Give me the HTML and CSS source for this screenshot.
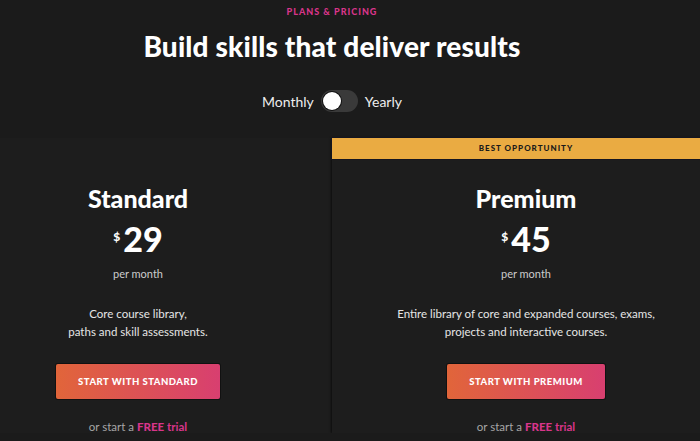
FILE: index.html
```html
<!DOCTYPE html>
<html lang="en">
<head>
  <meta charset="UTF-8" />
  <title>Plans &amp; Pricing</title>
  <link rel="stylesheet" href="styles.css">
</head>
<body>

  <div class="page">
    <p class="eyebrow">PLANS &amp; PRICING</p>
    <h1>Build skills that deliver results</h1>

    <div class="billing">
      <span>Monthly</span>
      <span class="switch"><span class="knob"></span></span>
      <span>Yearly</span>
    </div>

    <div class="plans">
      <div class="plan">
        <div class="plan-body">
          <h2>Standard</h2>
          <div class="price"><sup>$</sup>29</div>
          <p class="period">per month</p>
          <p class="desc">Core course library,<br>paths and skill assessments.</p>
          <a class="btn" href="#">START WITH STANDARD</a>
          <p class="trial">or start a <a href="#"><b>FREE</b> trial</a></p>
        </div>
      </div>

      <div class="plan featured">
        <div class="banner">BEST OPPORTUNITY</div>
        <div class="plan-body">
          <h2>Premium</h2>
          <div class="price"><sup>$</sup>45</div>
          <p class="period">per month</p>
          <p class="desc">Entire library of core and expanded courses, exams,<br>projects and interactive courses.</p>
          <a class="btn" href="#">START WITH PREMIUM</a>
          <p class="trial">or start a <a href="#"><b>FREE</b> trial</a></p>
        </div>
      </div>
    </div>
  </div>

</body>
</html>
```

FILE: styles.css
```css
body {
  margin: 0;
  background: #1b1b1b;
  color: #fff;
  font-family: Lato, "Open Sans", sans-serif;
  overflow: hidden;
}

.page {
  width: 664px;
  text-align: center;
}

.eyebrow {
  margin: 0;
  padding-top: 6px;
  font-size: 9px;
  font-weight: 900;
  letter-spacing: 1px;
  color: #d8358a;
}

h1 {
  margin: 13px 0 0;
  font-size: 28px;
  font-weight: 900;
  line-height: 32px;
  letter-spacing: 0.15px;
}

.billing {
  display: flex;
  justify-content: center;
  align-items: center;
  gap: 7px;
  margin-top: 28px;
  font-size: 14px;
  color: #eee;
}

.switch {
  width: 37px;
  height: 22px;
  border-radius: 11px;
  background: #3a3a3a;
  display: flex;
  align-items: center;
  padding: 0 2px;
  box-sizing: border-box;
}

.knob {
  width: 18px;
  height: 18px;
  border-radius: 50%;
  background: #fff;
  box-shadow: 0 0 0 1px #111;
}

.plans {
  display: flex;
  justify-content: center;
  margin-top: 26px;
}

.plan {
  flex: 0 0 388px;
  background: #1d1d1d;
  padding-top: 21px;
}

.plan.featured {
  padding-top: 0;
  box-shadow: -1px 0 2px rgba(0, 0, 0, 0.6);
}

.banner {
  height: 21px;
  line-height: 21px;
  background: #eaab42;
  color: #1a1a1a;
  font-size: 8px;
  font-weight: 900;
  letter-spacing: 1px;
  box-shadow: 0 0 0 1px #151520;
}

.plan-body {
  padding-top: 24px;
}

h2 {
  margin: 0;
  font-size: 25px;
  font-weight: 900;
  line-height: 30px;
}

.price {
  margin-top: 9px;
  font-size: 34px;
  font-weight: 900;
  line-height: 34px;
}

.price sup {
  font-size: 12px;
  vertical-align: top;
  position: relative;
  top: -2px;
  margin-right: 3px;
}

.period {
  margin: 11px 0 0;
  font-size: 11px;
  color: #ccc;
}

.desc {
  margin: 25px 0 0;
  font-size: 11.5px;
  line-height: 18px;
  color: #e6e6e6;
}

.btn {
  display: inline-block;
  margin-top: 23px;
  padding: 0 22px;
  height: 35px;
  line-height: 35px;
  border-radius: 2px;
  background: linear-gradient(90deg, #e1653a, #d83f70);
  box-shadow: 0 0 0 1px #111;
  color: #fff;
  font-size: 9.5px;
  font-weight: 900;
  letter-spacing: 0.5px;
  text-decoration: none;
}

.trial {
  margin: 21px 0 0;
  font-size: 11.5px;
  color: #a6a6a6;
}

.trial a {
  color: #d8358a;
  text-decoration: none;
  font-weight: 700;
}
```
